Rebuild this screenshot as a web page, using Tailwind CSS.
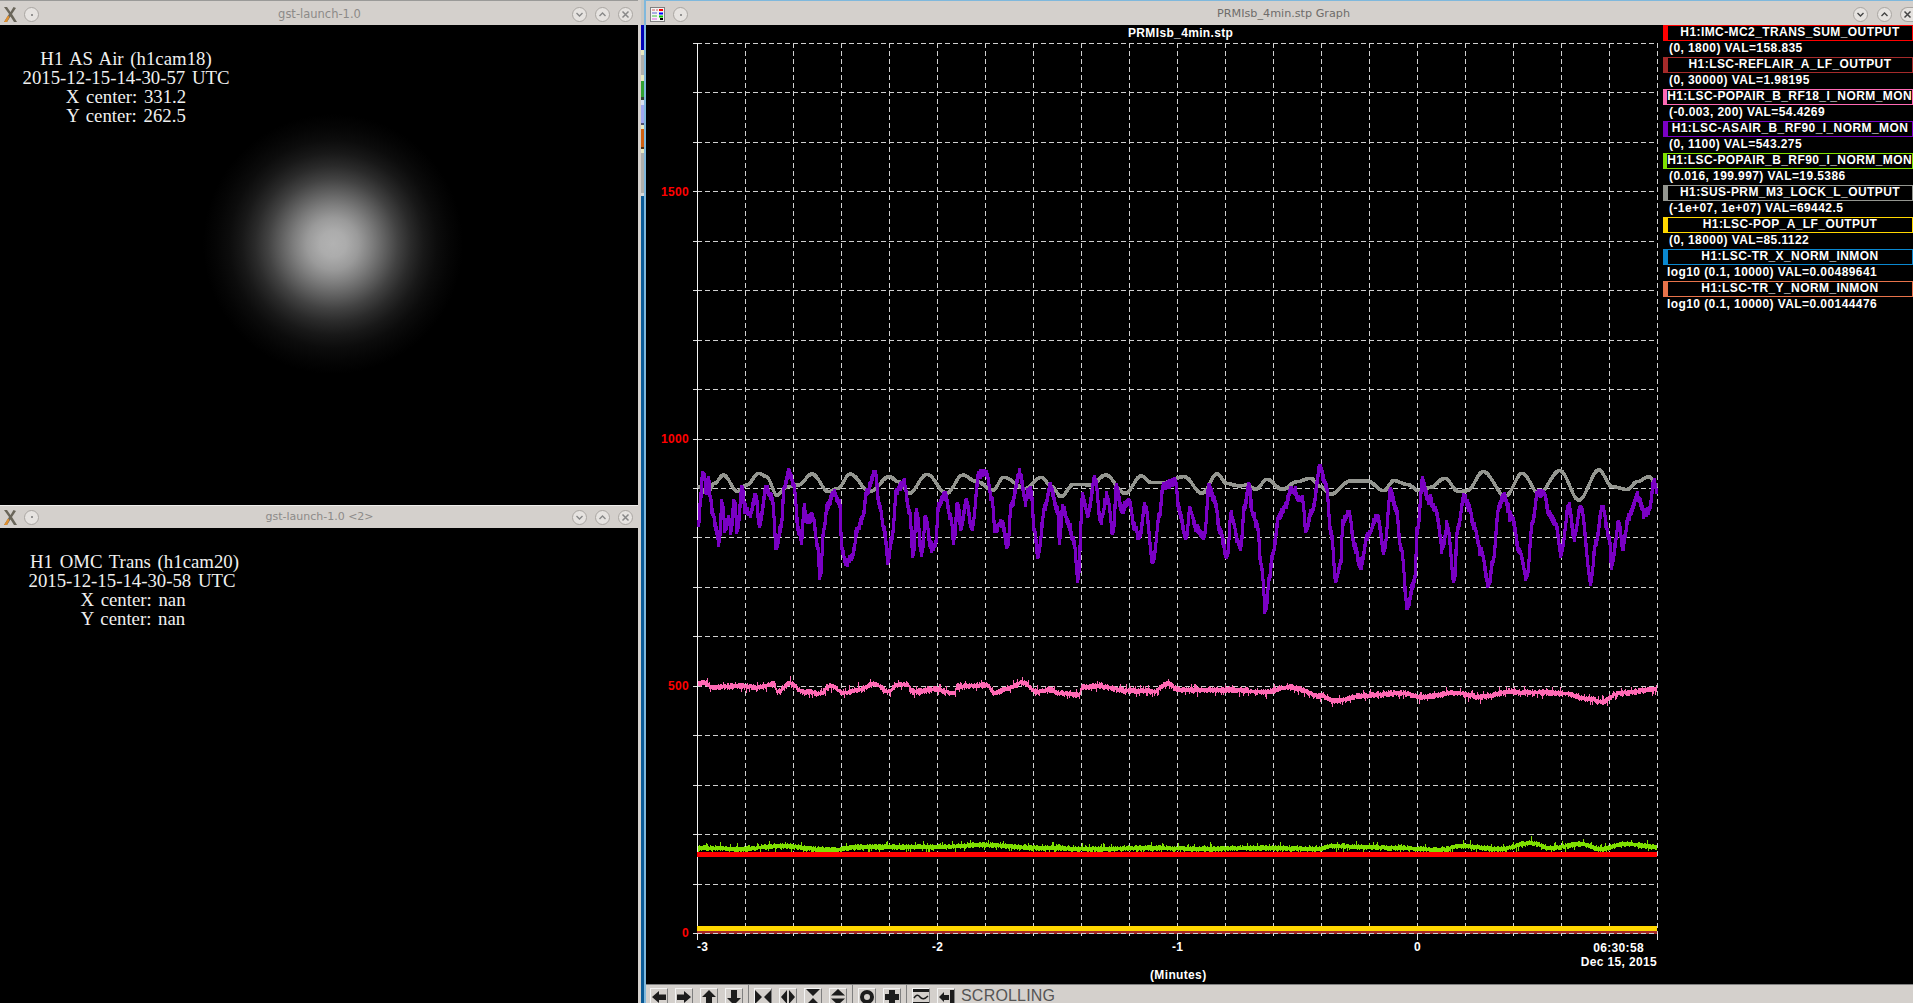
<!DOCTYPE html>
<html>
<head>
<meta charset="utf-8">
<title>Screen</title>
<script src="https://cdn.jsdelivr.net/npm/@tailwindcss/browser@4"></script>
</head>
<body class="m-0 bg-black overflow-hidden">
<div class="flex w-[1913px] h-[1003px] overflow-hidden bg-[#b4b4b0] font-['Liberation_Sans',sans-serif]">

  <!-- left column -->
  <div class="flex flex-col w-[638px] h-full shrink-0">
    <div class="flex items-center h-[25px] shrink-0 pt-[3px] bg-[#d4d0cc] border-t border-t-[#9a9a98] pl-[2px] pr-[5px]">
      <svg class="w-[16px] h-[17px] shrink-0" viewBox="0 0 16 17"><path d="M2 1 L7 8 L2 16 L5 16 L8.5 10.5 L12 16 L15 16 L10 8 L14 2 L11.5 1 L8.5 6 L5 1 Z" fill="#6a665a"/><path d="M2 16 L6 9.5 L7.5 11 L5 16 Z" fill="#e09030"/></svg>
      <span class="ml-[6px] w-[15px] h-[15px] rounded-full border border-[#aaa6a2] bg-[#e6e3e0] flex items-center justify-center"><span class="w-[2px] h-[2px] rounded-full bg-[#777]"></span></span>
      <span class="flex-1 ml-[28px] text-center text-[#8c8a88] text-[11.5px] font-['DejaVu_Sans',sans-serif]">gst-launch-1.0</span>
      <span class="w-[15px] h-[15px] rounded-full border border-[#aaa6a2] bg-[#e6e3e0] flex items-center justify-center"><svg class="w-[9px] h-[9px]" viewBox="0 0 9 9"><path d="M1.5 3 L4.5 6 L7.5 3" fill="none" stroke="#888" stroke-width="1.4"/></svg></span>
      <span class="ml-[8px] w-[15px] h-[15px] rounded-full border border-[#aaa6a2] bg-[#e6e3e0] flex items-center justify-center"><svg class="w-[9px] h-[9px]" viewBox="0 0 9 9"><path d="M1.5 6 L4.5 3 L7.5 6" fill="none" stroke="#888" stroke-width="1.4"/></svg></span>
      <span class="ml-[8px] w-[15px] h-[15px] rounded-full border border-[#aaa6a2] bg-[#e6e3e0] flex items-center justify-center"><svg class="w-[9px] h-[9px]" viewBox="0 0 9 9"><path d="M1.5 1.5 L7.5 7.5 M7.5 1.5 L1.5 7.5" fill="none" stroke="#888" stroke-width="1.5"/></svg></span>
    </div>
    <div class="relative h-[480px] shrink-0 bg-black overflow-hidden font-['Liberation_Serif',serif] text-[18.8px] leading-[19px] [word-spacing:2px] text-[#f0f0f0]">
      <div class="absolute left-[203px] top-[89px] w-[260px] h-[260px] bg-[radial-gradient(circle_closest-side,#b2b2b2_0%,#acacac_10%,#9a9a9a_20%,#7e7e7e_30%,#606060_40%,#424242_50%,#2a2a2a_60%,#181818_70%,#0c0c0c_80%,#050505_90%,#000000_100%)]"></div>
      <div class="relative w-[206px] ml-[23px] mt-[24px] text-center whitespace-nowrap">
        <div class="flex justify-center">H1 AS Air (h1cam18)</div>
        <div class="flex justify-center">2015-12-15-14-30-57 UTC</div>
        <div class="flex justify-center">X center: 331.2</div>
        <div class="flex justify-center">Y center: 262.5</div>
      </div>
    </div>
    <div class="flex items-center h-[23px] shrink-0 bg-[#d4d0cc] border-t border-t-[#f0eeec] pl-[2px] pr-[5px]">
      <svg class="w-[16px] h-[17px] shrink-0" viewBox="0 0 16 17"><path d="M2 1 L7 8 L2 16 L5 16 L8.5 10.5 L12 16 L15 16 L10 8 L14 2 L11.5 1 L8.5 6 L5 1 Z" fill="#6a665a"/><path d="M2 16 L6 9.5 L7.5 11 L5 16 Z" fill="#e09030"/></svg>
      <span class="ml-[6px] w-[15px] h-[15px] rounded-full border border-[#aaa6a2] bg-[#e6e3e0] flex items-center justify-center"><span class="w-[2px] h-[2px] rounded-full bg-[#777]"></span></span>
      <span class="flex-1 ml-[28px] text-center text-[#8c8a88] text-[11px] font-['DejaVu_Sans',sans-serif]">gst-launch-1.0 &lt;2&gt;</span>
      <span class="w-[15px] h-[15px] rounded-full border border-[#aaa6a2] bg-[#e6e3e0] flex items-center justify-center"><svg class="w-[9px] h-[9px]" viewBox="0 0 9 9"><path d="M1.5 3 L4.5 6 L7.5 3" fill="none" stroke="#888" stroke-width="1.4"/></svg></span>
      <span class="ml-[8px] w-[15px] h-[15px] rounded-full border border-[#aaa6a2] bg-[#e6e3e0] flex items-center justify-center"><svg class="w-[9px] h-[9px]" viewBox="0 0 9 9"><path d="M1.5 6 L4.5 3 L7.5 6" fill="none" stroke="#888" stroke-width="1.4"/></svg></span>
      <span class="ml-[8px] w-[15px] h-[15px] rounded-full border border-[#aaa6a2] bg-[#e6e3e0] flex items-center justify-center"><svg class="w-[9px] h-[9px]" viewBox="0 0 9 9"><path d="M1.5 1.5 L7.5 7.5 M7.5 1.5 L1.5 7.5" fill="none" stroke="#888" stroke-width="1.5"/></svg></span>
    </div>
    <div class="flex-1 bg-black font-['Liberation_Serif',serif] text-[18.8px] leading-[19px] [word-spacing:2px] text-[#f0f0f0]">
      <div class="w-[213px] ml-[28px] mt-[24px] text-center whitespace-nowrap">
        <div class="flex justify-center">H1 OMC Trans (h1cam20)</div>
        <div class="flex justify-center pr-[5px]">2015-12-15-14-30-58 UTC</div>
        <div class="flex justify-center pr-[3px]">X center: nan</div>
        <div class="flex justify-center pr-[3px]">Y center: nan</div>
      </div>
    </div>
  </div>

  <!-- sliver of the window behind -->
  <div class="flex flex-col w-[8px] shrink-0 h-full bg-[#b4b4b0] border-l-[3px] border-l-[#d4d0cc] border-r-[2px] border-r-[#7fb8dc]">
    <div class="h-[25px] bg-[#c8c8c4]"></div>
    <div class="h-[25px] bg-[#0000b4]"></div>
    <div class="h-[5px] bg-[#e8e8c0]"></div>
    <div class="h-[20px] bg-[#b0b0ac]"></div>
    <div class="h-[6px] bg-[#e8e8c0]"></div>
    <div class="h-[16px] bg-[#30a030]"></div>
    <div class="h-[3px] bg-[#304030]"></div>
    <div class="h-[5px] bg-[#d8e0f0]"></div>
    <div class="h-[18px] bg-[#a0a8f0]"></div>
    <div class="h-[2px] bg-[#505070]"></div>
    <div class="h-[4px] bg-[#e8e8c0]"></div>
    <div class="h-[18px] bg-[#d06010]"></div>
    <div class="h-[2px] bg-[#503010]"></div>
    <div class="h-[4px] bg-[#e8e8c0]"></div>
    <div class="h-[40px] bg-[#b0b0ac]"></div>
    <div class="h-[3px] bg-[#d8d8d8]"></div>
    <div class="flex-1 bg-[#0a5a96]"></div>
  </div>

  <!-- graph window -->
  <div class="flex flex-col flex-1 min-w-0 h-full bg-black">
    <div class="flex items-center h-[25px] shrink-0 pt-[3px] bg-[#d4d0cc] border-t border-t-[#7fb8dc] pl-[4px]">
      <svg class="w-[15px] h-[15px] shrink-0" viewBox="0 0 15 15"><rect x="0.5" y="0.5" width="14" height="14" fill="#f4f4f4" stroke="#808080"/><path d="M2 3 H5 M6 3 H8" stroke="#d06060" stroke-width="1"/><path d="M9 3 H13" stroke="#ff0000" stroke-width="2"/><path d="M2 6 H7" stroke="#6060d0"/><path d="M9 6.5 H13" stroke="#0000ff" stroke-width="2"/><path d="M2 9 H7" stroke="#40c040"/><path d="M9 9.5 H13" stroke="#00c000" stroke-width="2"/><path d="M2 12 H7" stroke="#e060e0"/><path d="M10 12 H13" stroke="#000" stroke-width="2"/></svg>
      <span class="ml-[8px] w-[15px] h-[15px] rounded-full border border-[#aaa6a2] bg-[#e6e3e0] flex items-center justify-center"><span class="w-[2px] h-[2px] rounded-full bg-[#777]"></span></span>
      <span class="flex-1 ml-[26px] text-center text-[#6e6c6a] text-[11.2px] font-['DejaVu_Sans',sans-serif]">PRMIsb_4min.stp Graph</span>
      <span class="w-[15px] h-[15px] rounded-full border border-[#aaa6a2] bg-[#e6e3e0] flex items-center justify-center"><svg class="w-[9px] h-[9px]" viewBox="0 0 9 9"><path d="M1.5 3 L4.5 6 L7.5 3" fill="none" stroke="#444" stroke-width="1.4"/></svg></span>
      <span class="ml-[9px] w-[15px] h-[15px] rounded-full border border-[#aaa6a2] bg-[#e6e3e0] flex items-center justify-center"><svg class="w-[9px] h-[9px]" viewBox="0 0 9 9"><path d="M1.5 6 L4.5 3 L7.5 6" fill="none" stroke="#444" stroke-width="1.4"/></svg></span>
      <span class="ml-[8px] w-[13px] h-[15px] rounded-l-full border border-r-0 border-[#aaa6a2] bg-[#e6e3e0] flex items-center justify-center"><svg class="w-[9px] h-[9px]" viewBox="0 0 9 9"><path d="M1.5 1.5 L7.5 7.5 M7.5 1.5 L1.5 7.5" fill="none" stroke="#444" stroke-width="1.5"/></svg></span>
    </div>

    <div class="flex flex-1 min-h-0">
      <!-- plot canvas: page coordinates minus (646,25) -->
      <div class="relative w-[1017px] shrink-0 text-[12px] font-bold whitespace-nowrap text-white tracking-[0.35px]">
        <svg id="plot" class="absolute inset-0 w-[1017px] h-[959px]" viewBox="646 25 1017 959" shape-rendering="crispEdges"></svg>
        <div class="absolute left-[482px] top-[1px] leading-[14px]">PRMIsb_4min.stp</div>
        <div class="absolute left-[0px] w-[43px] top-[160px] text-right leading-[14px] text-[#ff0000]">1500</div>
        <div class="absolute left-[0px] w-[43px] top-[407px] text-right leading-[14px] text-[#ff0000]">1000</div>
        <div class="absolute left-[0px] w-[43px] top-[654px] text-right leading-[14px] text-[#ff0000]">500</div>
        <div class="absolute left-[0px] w-[43px] top-[901px] text-right leading-[14px] text-[#ff0000]">0</div>
        <div class="absolute left-[51px] top-[915px] leading-[14px]">-3</div>
        <div class="absolute left-[286px] top-[915px] leading-[14px]">-2</div>
        <div class="absolute left-[526px] top-[915px] leading-[14px]">-1</div>
        <div class="absolute left-[768px] top-[915px] leading-[14px]">0</div>
        <div class="absolute right-[19px] top-[916px] leading-[14px]">06:30:58</div>
        <div class="absolute right-[6px] top-[930px] leading-[14px]">Dec 15, 2015</div>
        <div class="absolute left-[504px] top-[943px] leading-[14px]">(Minutes)</div>
      </div>

      <!-- legend -->
      <div class="flex-1 min-w-0 text-white text-[12px] font-bold leading-[15px] whitespace-nowrap tracking-[0.42px]">
        <div class="flex h-[16px]"><span class="w-[5px] bg-[#ff0000]"></span><div class="flex-1 text-center border-y border-r border-[#ff0000] leading-[13px]">H1:IMC-MC2_TRANS_SUM_OUTPUT</div></div>
        <div class="h-[16px] pl-[6px]">(0, 1800) VAL=158.835</div>
        <div class="flex h-[16px]"><span class="w-[5px] bg-[#a52a2a]"></span><div class="flex-1 text-center border-y border-r border-[#a52a2a] leading-[13px]">H1:LSC-REFLAIR_A_LF_OUTPUT</div></div>
        <div class="h-[16px] pl-[6px]">(0, 30000) VAL=1.98195</div>
        <div class="flex h-[16px]"><span class="w-[5px] bg-[#ff69b4]"></span><div class="flex-1 text-center border-y border-r border-[#ff69b4] leading-[13px]">H1:LSC-POPAIR_B_RF18_I_NORM_MON</div></div>
        <div class="h-[16px] pl-[6px]">(-0.003, 200) VAL=54.4269</div>
        <div class="flex h-[16px]"><span class="w-[5px] bg-[#7a00c4]"></span><div class="flex-1 text-center border-y border-r border-[#7a00c4] leading-[13px]">H1:LSC-ASAIR_B_RF90_I_NORM_MON</div></div>
        <div class="h-[16px] pl-[6px]">(0, 1100) VAL=543.275</div>
        <div class="flex h-[16px]"><span class="w-[5px] bg-[#7fe000]"></span><div class="flex-1 text-center border-y border-r border-[#7fe000] leading-[13px]">H1:LSC-POPAIR_B_RF90_I_NORM_MON</div></div>
        <div class="h-[16px] pl-[6px]">(0.016, 199.997) VAL=19.5386</div>
        <div class="flex h-[16px]"><span class="w-[5px] bg-[#949690]"></span><div class="flex-1 text-center border-y border-r border-[#949690] leading-[13px]">H1:SUS-PRM_M3_LOCK_L_OUTPUT</div></div>
        <div class="h-[16px] pl-[6px]">(-1e+07, 1e+07) VAL=69442.5</div>
        <div class="flex h-[16px]"><span class="w-[5px] bg-[#ffd700]"></span><div class="flex-1 text-center border-y border-r border-[#ffd700] leading-[13px]">H1:LSC-POP_A_LF_OUTPUT</div></div>
        <div class="h-[16px] pl-[6px]">(0, 18000) VAL=85.1122</div>
        <div class="flex h-[16px]"><span class="w-[5px] bg-[#0a88d0]"></span><div class="flex-1 text-center border-y border-r border-[#0a88d0] leading-[13px]">H1:LSC-TR_X_NORM_INMON</div></div>
        <div class="h-[16px] pl-[4px]">log10 (0.1, 10000) VAL=0.00489641</div>
        <div class="flex h-[16px]"><span class="w-[5px] bg-[#e8734a]"></span><div class="flex-1 text-center border-y border-r border-[#e8734a] leading-[13px]">H1:LSC-TR_Y_NORM_INMON</div></div>
        <div class="h-[16px] pl-[4px]">log10 (0.1, 10000) VAL=0.00144476</div>
      </div>
    </div>

    <!-- toolbar -->
    <div class="flex items-end h-[19px] shrink-0 bg-[#d4d0cc] border-t border-t-[#808080] pl-[4px] text-[#3c3c3c]">
      <div class="flex gap-[7px]">
        <span class="w-[18px] h-[15px] border-l border-t border-l-[#f4f4f4] border-t-[#f4f4f4] border-r border-r-[#808080]"><svg class="w-[16px] h-[16px]" viewBox="0 0 16 16"><path d="M1 8 L8 2 V5.5 H15 V11 H8 V14 Z" fill="#1c1c1c"/></svg></span>
        <span class="w-[18px] h-[15px] border-l border-t border-l-[#f4f4f4] border-t-[#f4f4f4] border-r border-r-[#808080]"><svg class="w-[16px] h-[16px]" viewBox="0 0 16 16"><path d="M15 8 L8 2 V5.5 H1 V11 H8 V14 Z" fill="#1c1c1c"/></svg></span>
        <span class="w-[18px] h-[15px] border-l border-t border-l-[#f4f4f4] border-t-[#f4f4f4] border-r border-r-[#808080]"><svg class="w-[16px] h-[16px]" viewBox="0 0 16 16"><path d="M8 1 L15 8 H11 V16 H5 V8 H1 Z" fill="#1c1c1c"/></svg></span>
        <span class="w-[18px] h-[15px] border-l border-t border-l-[#f4f4f4] border-t-[#f4f4f4] border-r border-r-[#808080]"><svg class="w-[16px] h-[16px]" viewBox="0 0 16 16"><path d="M5 1 H11 V9 H15 L8 16 L1 9 H5 Z" fill="#1c1c1c"/></svg></span>
      </div>
      <span class="w-px h-[18px] bg-[#808080] ml-[5px]"></span>
      <div class="flex gap-[7px] ml-[5px]">
        <span class="w-[18px] h-[15px] border-l border-t border-l-[#f4f4f4] border-t-[#f4f4f4] border-r border-r-[#808080]"><svg class="w-[16px] h-[16px]" viewBox="0 0 16 16"><path d="M0 1 L7 8 L0 15 Z M16 1 L9 8 L16 15 Z" fill="#1c1c1c"/></svg></span>
        <span class="w-[18px] h-[15px] border-l border-t border-l-[#f4f4f4] border-t-[#f4f4f4] border-r border-r-[#808080]"><svg class="w-[16px] h-[16px]" viewBox="0 0 16 16"><path d="M7 1 V15 L1 8 Z M9 1 V15 L15 8 Z" fill="#1c1c1c"/></svg></span>
        <span class="w-[18px] h-[15px] border-l border-t border-l-[#f4f4f4] border-t-[#f4f4f4] border-r border-r-[#808080]"><svg class="w-[16px] h-[16px]" viewBox="0 0 16 16"><path d="M1 0 H15 L8 7 Z M1 16 H15 L8 9 Z" fill="#1c1c1c"/></svg></span>
        <span class="w-[18px] h-[15px] border-l border-t border-l-[#f4f4f4] border-t-[#f4f4f4] border-r border-r-[#808080]"><svg class="w-[16px] h-[16px]" viewBox="0 0 16 16"><path d="M8 0 L15 6.5 H1 Z M1 9.5 H15 L8 16 Z" fill="#1c1c1c"/></svg></span>
      </div>
      <span class="w-px h-[18px] bg-[#808080] ml-[5px]"></span>
      <div class="flex gap-[7px] ml-[5px]">
        <span class="w-[18px] h-[15px] border-l border-t border-l-[#f4f4f4] border-t-[#f4f4f4] border-r border-r-[#808080]"><svg class="w-[16px] h-[16px]" viewBox="0 0 16 16"><circle cx="8" cy="8" r="5" fill="none" stroke="#1c1c1c" stroke-width="4"/></svg></span>
        <span class="w-[18px] h-[15px] border-l border-t border-l-[#f4f4f4] border-t-[#f4f4f4] border-r border-r-[#808080]"><svg class="w-[16px] h-[16px]" viewBox="0 0 16 16"><path d="M5 1 H11 V5 H15 V11 H11 V15 H5 V11 H1 V5 H5 Z" fill="#1c1c1c"/></svg></span>
      </div>
      <span class="w-px h-[18px] bg-[#808080] ml-[5px]"></span>
      <div class="flex gap-[7px] ml-[5px]">
        <span class="w-[18px] h-[15px] border-l border-t border-l-[#f4f4f4] border-t-[#f4f4f4] border-r border-r-[#808080]"><svg class="w-[16px] h-[16px]" viewBox="0 0 16 16"><path d="M0 0 H16 V3 H0 Z M0 13 H16 V16 H0 Z" fill="#1c1c1c"/><path d="M1 9 Q4 4 7 8 T15 7" fill="none" stroke="#1c1c1c" stroke-width="1.5"/></svg></span>
        <span class="w-[18px] h-[15px] border-l border-t border-l-[#f4f4f4] border-t-[#f4f4f4] border-r border-r-[#808080]"><svg class="w-[16px] h-[16px]" viewBox="0 0 16 16"><path d="M1 8 L6 3 V6 H11 V11 H6 V13 Z M12 1 H16 V16 H12 Z" fill="#1c1c1c"/></svg></span>
      </div>
      <span class="ml-[6px] mb-[-2px] text-[16px] leading-[18px] font-light text-[#555555] tracking-[0.2px]">SCROLLING</span>
    </div>
  </div>
</div>

<script>
(function () {
  var svg = document.getElementById('plot');
  var NS = 'http://www.w3.org/2000/svg';
  function add(tag, attrs) {
    var e = document.createElementNS(NS, tag);
    for (var k in attrs) e.setAttribute(k, attrs[k]);
    svg.appendChild(e);
    return e;
  }
  var X0 = 697, X1 = 1657, Y0 = 43, Y1 = 933, i;
  for (i = 0; i <= 18; i++) {
    var y = Math.round(Y0 + (Y1 - Y0) * i / 18);
    add('line', { x1: 693, x2: X0, y1: y + .5, y2: y + .5, stroke: '#e0e0e0' });
    add('line', { x1: X0, x2: X1, y1: y + .5, y2: y + .5, stroke: '#d0d0d0', 'stroke-dasharray': '5 3' });
  }
  for (i = 1; i <= 20; i++) {
    var x = X0 + 48 * i;
    add('line', { x1: x + .5, x2: x + .5, y1: Y0, y2: Y1, stroke: '#d0d0d0', 'stroke-dasharray': '5 3' });
    add('line', { x1: x + .5, x2: x + .5, y1: Y1, y2: Y1 + (i % 5 === 0 ? 7 : 3), stroke: '#e8e8e8' });
  }
  add('line', { x1: X0 + .5, x2: X0 + .5, y1: Y0, y2: Y1 + 7, stroke: '#f4f4f4' });

  var seed = 12345;
  function rnd() { seed = (seed * 16807) % 2147483647; return seed / 2147483647; }

  // Each sample is a short vertical bar; barW sets its width in pixels.
  function trace(anchors, color, barW, height, noise, spike) {
    var j = 0, d = '', prev = null;
    for (var px = X0 + 1; px <= X1 - 1; px++) {
      while (j < anchors.length - 2 && anchors[j + 1][0] < px) j++;
      var a = anchors[j], b = anchors[j + 1];
      var t = Math.max(0, Math.min(1, (px - a[0]) / (b[0] - a[0])));
      t = (1 - Math.cos(Math.PI * t)) / 2;
      var base = a[1] + (b[1] - a[1]) * t;
      var lo = base - height / 2 - rnd() * noise / 2, hi = base + height / 2 + rnd() * noise / 2;
      if (spike && rnd() < spike) { if (rnd() < .5) lo -= rnd() * 4; else hi += rnd() * 4; }
      if (prev !== null) { lo = Math.min(lo, prev); hi = Math.max(hi, prev); }
      d += 'M' + (px + .5) + ' ' + Math.round(lo) + 'V' + Math.round(hi);
      prev = base;
    }
    add('path', { d: d, fill: 'none', stroke: color, 'stroke-width': barW });
  }
  function z7(a) { return a.map(function (p) { return [680 + p[0] / 2.8, 450 + p[1] / 3]; }); }
  function z8(a) { return a.map(function (p) { return [1240 + p[0] / 3, 450 + p[1] / 3]; }); }
  function z10(a) { return a.map(function (p) { return [680 + p[0] / 3, 660 + p[1] / 3]; }); }

  var purple = z7([[50,220],[55,150],[60,80],[65,70],[72,130],[78,90],[82,140],[90,190],[100,240],[107,280],[115,155],[125,240],[135,205],[140,245],[150,150],[158,240],[172,115],[180,180],[195,190],[210,135],[220,225],[240,115],[255,140],[268,295],[280,235],[290,110],[305,65],[315,100],[330,240],[338,270],[345,175],[355,210],[370,200],[382,280],[390,385],[400,240],[410,170],[430,130],[445,160],[450,290],[462,340],[480,320],[495,240],[510,200],[520,130],[545,70],[555,160],[570,240],[580,335],[590,270],[605,120],[625,100],[640,180],[650,320],[660,185],[675,310],[685,200],[700,285],[712,290],[722,170],[740,130],[755,200],[765,270],[775,160],[785,230],[800,155],[815,235],[835,75],[855,65],[870,140],[880,240],[900,215],[915,290],[925,165],[950,70],[965,150],[980,120],[990,240],[1000,315],[1020,170],[1035,110],[1055,180],[1060,270],[1070,170],[1085,220],[1100,270],[1112,390],[1125,140],[1140,190],[1160,85],[1175,210],[1195,145],[1210,250],[1220,110],[1235,180],[1255,150],[1270,230],[1285,260],[1300,165],[1322,335],[1340,200],[1350,110],[1385,95],[1395,180],[1415,265],[1425,180],[1445,235],[1465,260],[1480,110],[1495,150],[1510,240],[1530,320],[1540,195],[1565,285]])
   .concat(z8([[0,290],[10,180],[25,105],[35,190],[50,230],[60,340],[75,480],[85,390],[95,315],[115,200],[135,170],[150,120],[185,150],[195,240],[215,180],[238,50],[255,100],[270,240],[285,390],[300,340],[305,220],[325,190],[340,280],[360,350],[380,260],[410,200],[430,300],[450,120],[465,170],[480,290],[500,470],[520,400],[530,240],[545,95],[565,150],[585,180],[605,290],[620,230],[640,395],[650,240],[670,140],[685,170],[700,230],[720,300],[745,405],[755,340],[775,170],[790,140],[815,205],[835,300],[858,380],[875,220],[890,130],[910,130],[925,190],[945,220],[960,310],[985,170],[1000,260],[1020,170],[1050,390],[1065,280],[1085,170],[1105,260],[1112,345],[1135,220],[1145,290],[1165,200],[1190,140],[1215,190],[1225,180],[1240,95],[1250,130]]));
  var gray = z7([[50,110],[75,130],[95,100],[120,75],[160,125],[185,105],[220,70],[240,80],[270,135],[300,110],[330,105],[368,72],[415,125],[440,115],[475,72],[530,125],[585,80],[610,95],[640,130],[690,73],[745,130],[790,75],[830,95],[875,120],[905,82],[965,115],[1010,82],[1040,110],[1065,140],[1100,103],[1150,105],[1190,75],[1245,130],[1290,78],[1320,98],[1350,98],[1410,80],[1460,130],[1502,72],[1530,100],[1565,108]])
   .concat(z8([[0,108],[20,105],[45,118],[80,88],[125,118],[170,95],[210,85],[240,110],[270,133],[330,93],[380,93],[430,122],[460,92],[500,103],[535,122],[570,112],[612,85],[655,125],[680,122],[728,65],[795,138],[845,70],[895,130],[958,62],[1015,150],[1075,60],[1115,110],[1160,118],[1190,95],[1225,80],[1250,105]]));
  var pink = z10([[52,72],[70,68],[95,82],[130,80],[170,78],[240,82],[280,72],[290,95],[330,70],[365,95],[420,100],[450,78],[490,98],[540,88],[580,72],[625,95],[650,75],[680,72],[695,95],[770,88],[820,100],[830,80],[920,75],[940,100],[985,85],[1025,68],[1070,95],[1110,88],[1135,100],[1195,105],[1205,82],[1245,78],[1350,92],[1420,95],[1460,72],[1500,90]])
   .concat([[1230,690],[1265,692],[1290,687],[1320,696],[1335,701],[1360,696],[1400,693],[1420,697],[1455,693],[1480,697],[1510,692],[1560,693],[1590,699],[1600,702],[1620,693],[1657,689]]);
  var green = [[697,848],[740,849],[780,846],[830,850],[860,847],[940,847],[980,845],[1040,848],[1100,849],[1150,848],[1200,849],[1260,848],[1320,849],[1330,846],[1400,848],[1440,850],[1460,846],[1500,849],[1530,843],[1550,848],[1580,844],[1600,849],[1625,844],[1657,847]];

  trace(gray, '#949690', 3, 3, .5);
  trace(purple, '#7a00c4', 3, 3, 7, .2);
  trace(pink, '#ff69b4', 1, 3, 4, .3);
  trace(green, '#7fe000', 1, 3, 3, .3);
  add('rect', { x: X0, y: 852, width: 960, height: 5, fill: '#ff0000' });
  add('rect', { x: X0, y: 931, width: 960, height: 3, fill: '#a52a2a' });
  add('line', { x1: X0, x2: X1, y1: 933.5, y2: 933.5, stroke: '#d0d0d0', 'stroke-dasharray': '5 3' });
  add('rect', { x: X0, y: 926, width: 960, height: 5, fill: '#ffd700' });
})();
</script>
</body>
</html>
